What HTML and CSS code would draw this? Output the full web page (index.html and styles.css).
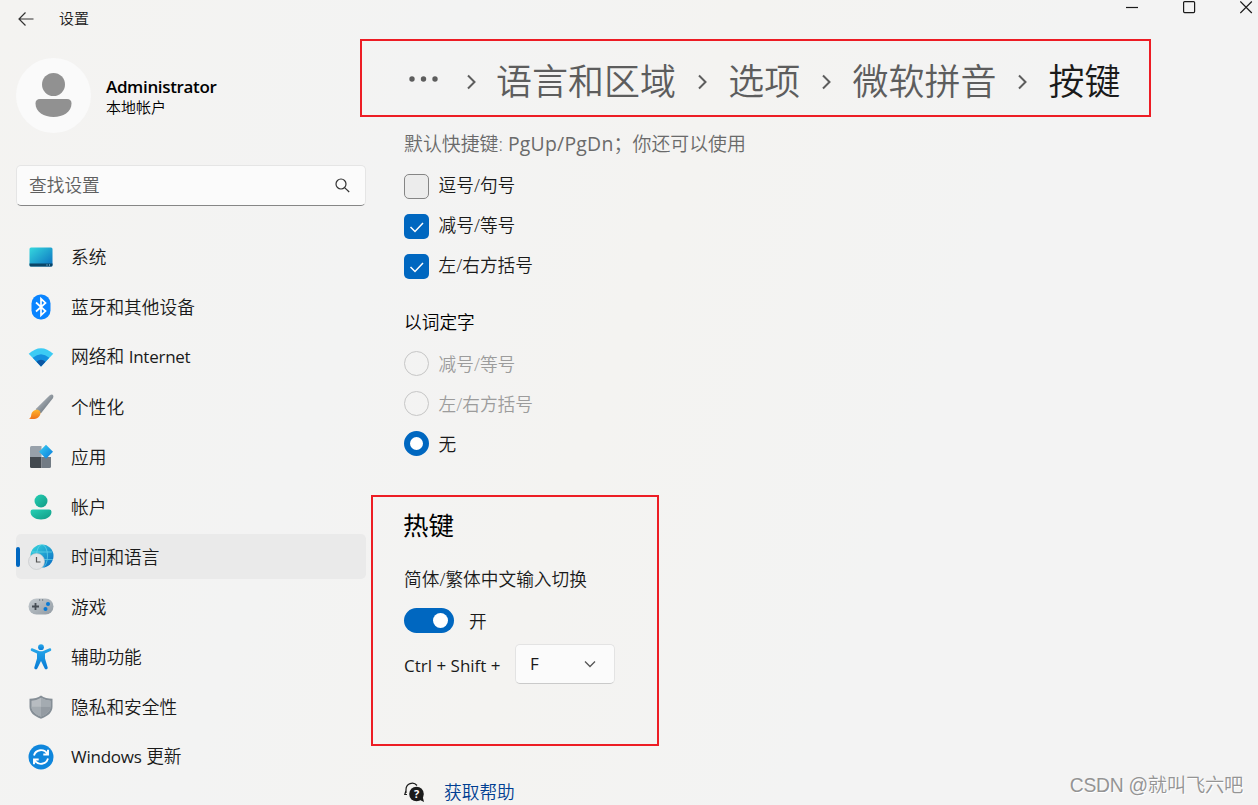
FILE: index.html
```html
<!DOCTYPE html>
<html lang="zh-CN">
<head>
  <meta charset="UTF-8" />
  <title>设置</title>
  <link rel="stylesheet" href="styles.css">
</head>
<body>

<header class="titlebar">
  <svg class="back" width="16" height="16" viewBox="0 0 16 16"><path d="M15.500 8H1M7.500 1.500L1 8l6.500 6.500" /></svg>
  <span class="app-title">设置</span>
  <div class="win-buttons">
    <svg width="13" height="13" viewBox="0 0 13 13"><path d="M0 6.500h12" /></svg>
    <svg width="13" height="13" viewBox="0 0 13 13"><rect x=".6" y=".6" width="11" height="11" rx="1" /></svg>
    <svg width="13" height="13" viewBox="0 0 13 13"><path d="M.3.500l11.500 11.500M11.800.500L.3 12" /></svg>
  </div>
</header>

<div class="layout">
  <aside class="sidebar">
    <div class="profile">
      <div class="avatar">
        <svg width="75" height="75" viewBox="0 0 75 75" fill="#919191"><circle cx="37.500" cy="26.500" r="11.500" /><path d="M24 41h27q4.500 0 4.500 4.500C55.500 54 47 59 37.500 59S19.500 54 19.500 45.500Q19.500 41 24 41z" /></svg>
      </div>
      <div class="who">
        <div class="name">Administrator</div>
        <div class="account">本地帐户</div>
      </div>
    </div>

    <div class="search">
      <span>查找设置</span>
      <svg width="15" height="15" viewBox="0 0 15 15"><circle cx="6" cy="6" r="5" /><path d="M9.600 9.600l4.600 4.400" /></svg>
    </div>

    <nav class="nav">
      <div class="nav-item">
        <svg width="26" height="26" viewBox="0 0 26 26">
          <defs><linearGradient id="sys" x1="0" y1="0" x2="1" y2="1"><stop offset="0" stop-color="#35d8de" /><stop offset="1" stop-color="#0b6fc0" /></linearGradient></defs>
          <rect x="1.500" y="3.500" width="23" height="19" rx="1.500" fill="url(#sys)" /><path d="M1.500 19.500h23V21q0 1.500-1.500 1.500H3q-1.500 0-1.500-1.500z" fill="#0b4566" /><path d="M18.500 21h1M21 21h1" stroke="#9ddcf5" />
        </svg>
        <span>系统</span>
      </div>
      <div class="nav-item">
        <svg width="26" height="26" viewBox="0 0 26 26">
          <rect x="3.500" y=".5" width="19" height="25" rx="9" fill="#0a84ff" /><path d="M8 8.500l9.500 8.500-4.500 4.200V4.800L17.500 9 8 17.500" fill="none" stroke="#fff" stroke-width="1.700" />
        </svg>
        <span>蓝牙和其他设备</span>
      </div>
      <div class="nav-item">
        <svg width="26" height="26" viewBox="0 0 26 26">
          <path d="M.7 9.800Q13-1.500 25.300 9.800L13 22.500z" fill="#3ccbf4" /><path d="M4.700 13.800Q13 6.500 21.300 13.800L13 22.500z" fill="#1490df" /><path d="M8.500 17.800Q13 13.500 17.500 17.800L13 22.500z" fill="#0b57a4" />
        </svg>
        <span>网络和 <span class="en">Internet</span></span>
      </div>
      <div class="nav-item">
        <svg width="26" height="26" viewBox="0 0 26 26">
          <defs><linearGradient id="handle" x1="0" y1="0" x2="1" y2="1"><stop offset=".2" stop-color="#b4bac0" /><stop offset=".8" stop-color="#68727b" /></linearGradient><linearGradient id="brush" x1="0" y1="0" x2="0" y2="1"><stop offset="0" stop-color="#ffb52c" /><stop offset="1" stop-color="#ef7218" /></linearGradient></defs>
          <path d="M7.500 15.200L21.500 1.500q2.700-2 3.700 0 .5 1.400-.5 2.900L12.800 19.500z" fill="url(#handle)" /><path d="M12 17.200c2 5-4 9.500-11 7.300 3-1.200 1.500-3.200 3-6 1.700-3 6-4 8-1.300z" fill="url(#brush)" />
        </svg>
        <span>个性化</span>
      </div>
      <div class="nav-item">
        <svg width="26" height="26" viewBox="0 0 26 26">
          <defs><linearGradient id="tile" x1="0" y1="0" x2="1" y2="1"><stop offset="0" stop-color="#39d0f4" /><stop offset="1" stop-color="#0877d9" /></linearGradient></defs>
          <path d="M3.500 2H13.500v11.500H2V3.500Q2 2 3.500 2z" fill="#98a1aa" /><path d="M2 13h11.500v11h-10Q2 24 2 22.500z" fill="#43494f" /><path d="M13.500 13H23v9.500q0 1.500-1.500 1.500h-8z" fill="#727b84" /><path d="M18 .8l7 7-7 7-7-7z" fill="url(#tile)" />
        </svg>
        <span>应用</span>
      </div>
      <div class="nav-item">
        <svg width="26" height="26" viewBox="0 0 26 26">
          <defs><linearGradient id="user" x1="0" y1="0" x2="1" y2="1"><stop offset="0" stop-color="#26d0b5" /><stop offset="1" stop-color="#119a84" /></linearGradient></defs>
          <g fill="url(#user)"><circle cx="13" cy="7" r="6.500" /><path d="M4.800 15.500h16.400q2.300 0 2.300 2.300C23.500 22.500 19 25.500 13 25.500S2.500 22.500 2.500 17.800q0-2.300 2.300-2.300z" /></g>
        </svg>
        <span>帐户</span>
      </div>
      <div class="nav-item active">
        <svg width="26" height="26" viewBox="0 0 26 26">
          <defs><linearGradient id="globe" x1="0" y1="0" x2="1" y2="1"><stop offset="0" stop-color="#38d9dd" /><stop offset="1" stop-color="#0868c4" /></linearGradient></defs>
          <circle cx="14" cy="12" r="11.500" fill="url(#globe)" /><g fill="none" stroke="#79e4f2" stroke-width=".8" opacity=".7"><path d="M4 8h20M3 15.500h22" /><ellipse cx="14" cy="12" rx="5.500" ry="11.500" /></g>
          <circle cx="8.500" cy="17.500" r="8" fill="#e3e4e6" stroke="#c6c9cc" stroke-width=".7" /><path d="M8.500 13v5h4" fill="none" stroke="#555" stroke-width="1.200" />
        </svg>
        <span>时间和语言</span>
      </div>
      <div class="nav-item">
        <svg width="26" height="26" viewBox="0 0 26 26">
          <defs><linearGradient id="pad" x1="0" y1="0" x2="1" y2="1"><stop offset="0" stop-color="#c5cbd0" /><stop offset="1" stop-color="#929ba3" /></linearGradient></defs>
          <rect x=".5" y="4.500" width="25" height="16" rx="8" fill="url(#pad)" /><path d="M7.500 9v7M4 12.500h7" stroke="#464d54" stroke-width="1.800" /><circle cx="20" cy="10" r="2" fill="#0878d4" /><circle cx="17.500" cy="15" r="2" fill="#0878d4" /><path d="M11 6h1.200M14 6h1.200" stroke="#555d65" />
        </svg>
        <span>游戏</span>
      </div>
      <div class="nav-item">
        <svg width="26" height="26" viewBox="0 0 26 26">
          <defs><linearGradient id="man" x1="0" y1="0" x2="0" y2="1"><stop offset="0" stop-color="#27a7ea" /><stop offset="1" stop-color="#087bd5" /></linearGradient></defs>
          <g fill="url(#man)"><circle cx="13" cy="3.200" r="2.900" /><path d="M4.300 4.300l6 2.500q2.700 1 5.400 0l6-2.500c1.500-.5 2.200 2.200.8 2.800L17 9.500v5l2.700 9c.4 1.800-2.300 2.500-3 .9L13 17l-3.700 7.400c-.7 1.600-3.400.9-3-.9l2.700-9v-5L3.500 7.100c-1.400-.6-.7-3.300.8-2.800z" /></g>
        </svg>
        <span>辅助功能</span>
      </div>
      <div class="nav-item">
        <svg width="26" height="26" viewBox="0 0 26 26">
          <path d="M13 1.500q4.500 3.300 11.500 3.300v8c0 5.500-4.500 9.500-11.500 12-7-2.500-11.500-6.500-11.500-12v-8Q8.500 4.800 13 1.500z" fill="#858e96" /><path d="M13 3.700q4 2.500 9.500 3v6c0 4.200-3.500 7.500-9.500 9.900-6-2.400-9.500-5.700-9.500-9.900v-6q5.500-.5 9.500-3z" fill="#b7bcc1" /><path d="M13 3.700q4 2.500 9.500 3v6H13zM3.500 12.700H13v9.900c-6-2.400-9.500-5.700-9.500-9.900z" fill="#a4abb1" /><path d="M13 12.700h9.500c0 4.200-3.500 7.500-9.500 9.900z" fill="#949ba2" />
        </svg>
        <span>隐私和安全性</span>
      </div>
      <div class="nav-item">
        <svg width="26" height="26" viewBox="0 0 26 26">
          <circle cx="13" cy="13" r="12.500" fill="#0f86dc" /><g fill="none" stroke="#fff" stroke-width="1.900"><path d="M6 11.500a7.200 7.200 0 0 1 13.200-1.700M20 14.500a7.200 7.200 0 0 1-13.200 1.700" /><path d="M20 5.800v4.700h-4.700M6 20.200v-4.700h4.700" /></g>
        </svg>
        <span><span class="en">Windows</span> 更新</span>
      </div>
    </nav>
  </aside>

  <main class="content">
    <div class="breadcrumb">
      <svg class="dots" width="30" height="6" viewBox="0 0 30 6"><circle cx="3" cy="3" r="2.700" /><circle cx="14.500" cy="3" r="2.700" /><circle cx="26" cy="3" r="2.700" /></svg>
      <svg class="chev first" width="11" height="16" viewBox="0 0 11 16"><path d="M2 1.500l6.500 6.500L2 14.500" /></svg>
      <span>语言和区域</span>
      <svg class="chev" width="11" height="16" viewBox="0 0 11 16"><path d="M2 1.500l6.500 6.500L2 14.500" /></svg>
      <span>选项</span>
      <svg class="chev" width="11" height="16" viewBox="0 0 11 16"><path d="M2 1.500l6.500 6.500L2 14.500" /></svg>
      <span>微软拼音</span>
      <svg class="chev" width="11" height="16" viewBox="0 0 11 16"><path d="M2 1.500l6.500 6.500L2 14.500" /></svg>
      <span class="current">按键</span>
    </div>

    <div class="hint">默认快捷键: <span class="keys">PgUp/PgDn</span>；你还可以使用</div>

    <div class="option"><span class="check"></span><span class="text">逗号/句号</span></div>
    <div class="option"><span class="check on"><svg width="25" height="25" viewBox="0 0 25 25"><path d="M6.500 13l4.500 4.500 8-8.500" /></svg></span><span class="text">减号/等号</span></div>
    <div class="option"><span class="check on"><svg width="25" height="25" viewBox="0 0 25 25"><path d="M6.500 13l4.500 4.500 8-8.500" /></svg></span><span class="text">左/右方括号</span></div>

    <div class="group-title">以词定字</div>
    <div class="option disabled"><span class="radio"></span>减号/等号</div>
    <div class="option disabled"><span class="radio"></span>左/右方括号</div>
    <div class="option"><span class="radio on"></span>无</div>

    <section class="hotkeys">
      <h2>热键</h2>
      <div class="hotkey-label">简体/繁体中文输入切换</div>
      <div class="toggle-row"><span class="toggle"></span>开</div>
      <div class="combo">
        <span class="combo-keys">Ctrl + Shift +</span>
        <div class="select"><span class="en">F</span><svg width="12" height="8" viewBox="0 0 12 8"><path d="M1 1.500l5 5 5-5" /></svg></div>
      </div>
    </section>

    <div class="help">
      <svg width="21" height="22" viewBox="0 0 21 22">
        <path d="M2 12V8.500a6.200 6.200 0 0 1 11-4M2 9.500L.8 13.500H3" fill="none" stroke="#1b1b1b" stroke-width="1.200" /><circle cx="12.500" cy="13" r="7.300" fill="#1b1b1b" /><path d="M15 18.500l5 2.500-1.500-6z" fill="#1b1b1b" />
        <text x="12.500" y="17" class="help-mark">?</text>
      </svg>
      <span>获取帮助</span>
    </div>
  </main>
</div>

<div class="watermark">CSDN @就叫飞六吧</div>

</body>
</html>
```
FILE: styles.css
```css
* {
  box-sizing: border-box;
}
body {
  margin: 0;
  width: 1258px;
  height: 805px;
  overflow: hidden;
  position: relative;
  background: linear-gradient(110deg, #f4f3f1 0%, #f3f3f3 30%, #f4f3f1 48%, #f3f3f3 70%, #f3f3f3 100%);
  font-family: "Open Sans", "Noto Sans CJK SC", sans-serif;
  font-size: 17.7px;
  line-height: 24px;
  font-weight: 350;
  color: #1a1a1a;
}
svg {
  display: block;
  flex: none;
}
.en {
  font-size: 17px;
  font-weight: 400;
  letter-spacing: -0.25px;
}

.titlebar {
  height: 39px;
  display: flex;
  align-items: flex-start;
}
.back {
  margin: 11px 0 0 18px;
  fill: none;
  stroke: #333;
  stroke-width: 1.2;
}
.app-title {
  margin: 6px 0 0 25px;
  font-size: 15px;
}
.win-buttons {
  margin-left: auto;
  padding: 1px 5px 0 0;
  display: flex;
  gap: 44px;
  fill: none;
  stroke: #1a1a1a;
  stroke-width: 1.2;
}

.layout {
  display: flex;
  height: 766px;
}
.sidebar {
  width: 366px;
  flex: none;
  padding: 19px 0 0 16px;
}
.profile {
  display: flex;
  gap: 15px;
  height: 75px;
  align-items: center;
}
.avatar {
  width: 75px;
  height: 75px;
  border-radius: 50%;
  background: #fafafa;
}
.who {
  padding-top: 3px;
  line-height: 20px;
  color: #000;
}
.name {
  font-size: 17px;
  font-weight: 600;
  letter-spacing: -0.35px;
}
.account {
  font-size: 15px;
}
.search {
  margin-top: 32px;
  height: 41px;
  padding: 0 15px 0 12px;
  display: flex;
  align-items: center;
  justify-content: space-between;
  background: #fbfbfb;
  border: 1px solid #e5e5e5;
  border-bottom-color: #868686;
  border-radius: 5px;
  color: #5f5f5f;
}
.search span {
  margin-top: -2px;
}
.search svg {
  fill: none;
  stroke: #333;
  stroke-width: 1.2;
}
.nav {
  margin-top: 28px;
  display: flex;
  flex-direction: column;
  gap: 5px;
}
.nav-item {
  height: 45px;
  padding-left: 12px;
  display: flex;
  align-items: center;
  gap: 17px;
  border-radius: 5px;
}
.nav-item.active {
  background: #eaeaea;
  padding-left: 0;
  gap: 0;
}
.nav-item.active::before {
  content: "";
  width: 4px;
  height: 20px;
  margin-right: 8px;
  border-radius: 2px;
  background: #0067c0;
}
.nav-item.active > span {
  margin-left: 17px;
}

.content {
  flex: 1;
}
.breadcrumb {
  margin-left: -6px;
  width: 791px;
  height: 78px;
  padding: 8px 0 0 47px;
  border: 2px solid #ed1c24;
  display: flex;
  align-items: center;
  font-size: 36px;
  line-height: 50px;
  color: #5d5d5d;
}
.dots {
  fill: #5d5d5d;
  margin-top: -7px;
}
.chev {
  margin: 0 20.6px;
  fill: none;
  stroke: #5d5d5d;
  stroke-width: 2;
}
.chev.first {
  margin: 0 19px 0 27px;
}
.current {
  color: #1a1a1a;
}
.hint {
  height: 49px;
  padding: 15px 0 0 38px;
  font-size: 18.9px;
  color: #6a6a6a;
}
.keys {
  font-size: 19.4px;
  font-weight: 400;
  letter-spacing: 0.25px;
}
.option {
  height: 40px;
  padding-left: 38px;
  display: flex;
  align-items: center;
  gap: 9.5px;
}
.text {
  margin-top: -2px;
}
.check {
  width: 25px;
  height: 25px;
  border: 1px solid #858585;
  border-radius: 5px;
  background: #ececec;
}
.check.on {
  border: 0;
  background: #0067c0;
}
.check svg {
  fill: none;
  stroke: #fff;
  stroke-width: 1.5;
}
.radio {
  width: 25px;
  height: 25px;
  margin-top: -2px;
  border: 1.5px solid #c6c6c6;
  border-radius: 50%;
}
.radio.on {
  border: 6px solid #0067c0;
  background: #fff;
}
.disabled {
  color: #9c9c9c;
}
.group-title {
  height: 58px;
  padding: 24px 0 0 38px;
  color: #000;
}

.hotkeys {
  margin: 31px 0 0 5px;
  width: 288px;
  height: 251px;
  padding-left: 31px;
  border: 2px solid #ed1c24;
}
.hotkeys h2 {
  margin: 11px 0 0 -1px;
  font-size: 25.5px;
  line-height: 34px;
  font-weight: 400;
  color: #000;
}
.hotkey-label {
  margin-top: 25px;
}
.toggle-row {
  margin-top: 17px;
  height: 25px;
  display: flex;
  align-items: center;
  gap: 15px;
}
.toggle {
  width: 50px;
  height: 25px;
  padding: 5px 6px 5px 5px;
  border-radius: 13px;
  background: #0067c0;
}
.toggle::after {
  content: "";
  display: block;
  width: 15px;
  height: 15px;
  margin-left: auto;
  border-radius: 50%;
  background: #fff;
}
.combo {
  margin-top: 11px;
  display: flex;
  align-items: center;
}
.combo-keys {
  width: 111px;
  padding-top: 3px;
  font-size: 17px;
  font-weight: 400;
  white-space: nowrap;
}
.select {
  width: 100px;
  height: 40px;
  padding: 0 18px 0 14px;
  display: flex;
  align-items: center;
  justify-content: space-between;
  background: #fbfbfb;
  border: 1px solid #e3e3e3;
  border-bottom-color: #cacaca;
  border-radius: 5px;
}
.select svg {
  fill: none;
  stroke: #555;
  stroke-width: 1.3;
}
.help {
  margin-top: 34px;
  padding-left: 38px;
  display: flex;
  align-items: center;
  gap: 19px;
  color: #003e92;
}
.help-mark {
  font-size: 11px;
  font-weight: 700;
  text-anchor: middle;
  fill: #fff;
}

/* sits on top of the page corner */
.watermark {
  position: absolute;
  right: 15px;
  bottom: 6px;
  font-family: "Liberation Sans", "Noto Sans CJK SC", sans-serif;
  font-size: 19.3px;
  letter-spacing: -0.25px;
  line-height: 26px;
  color: #949494;
  text-shadow: 1px 1px 0 #fff;
}
```
